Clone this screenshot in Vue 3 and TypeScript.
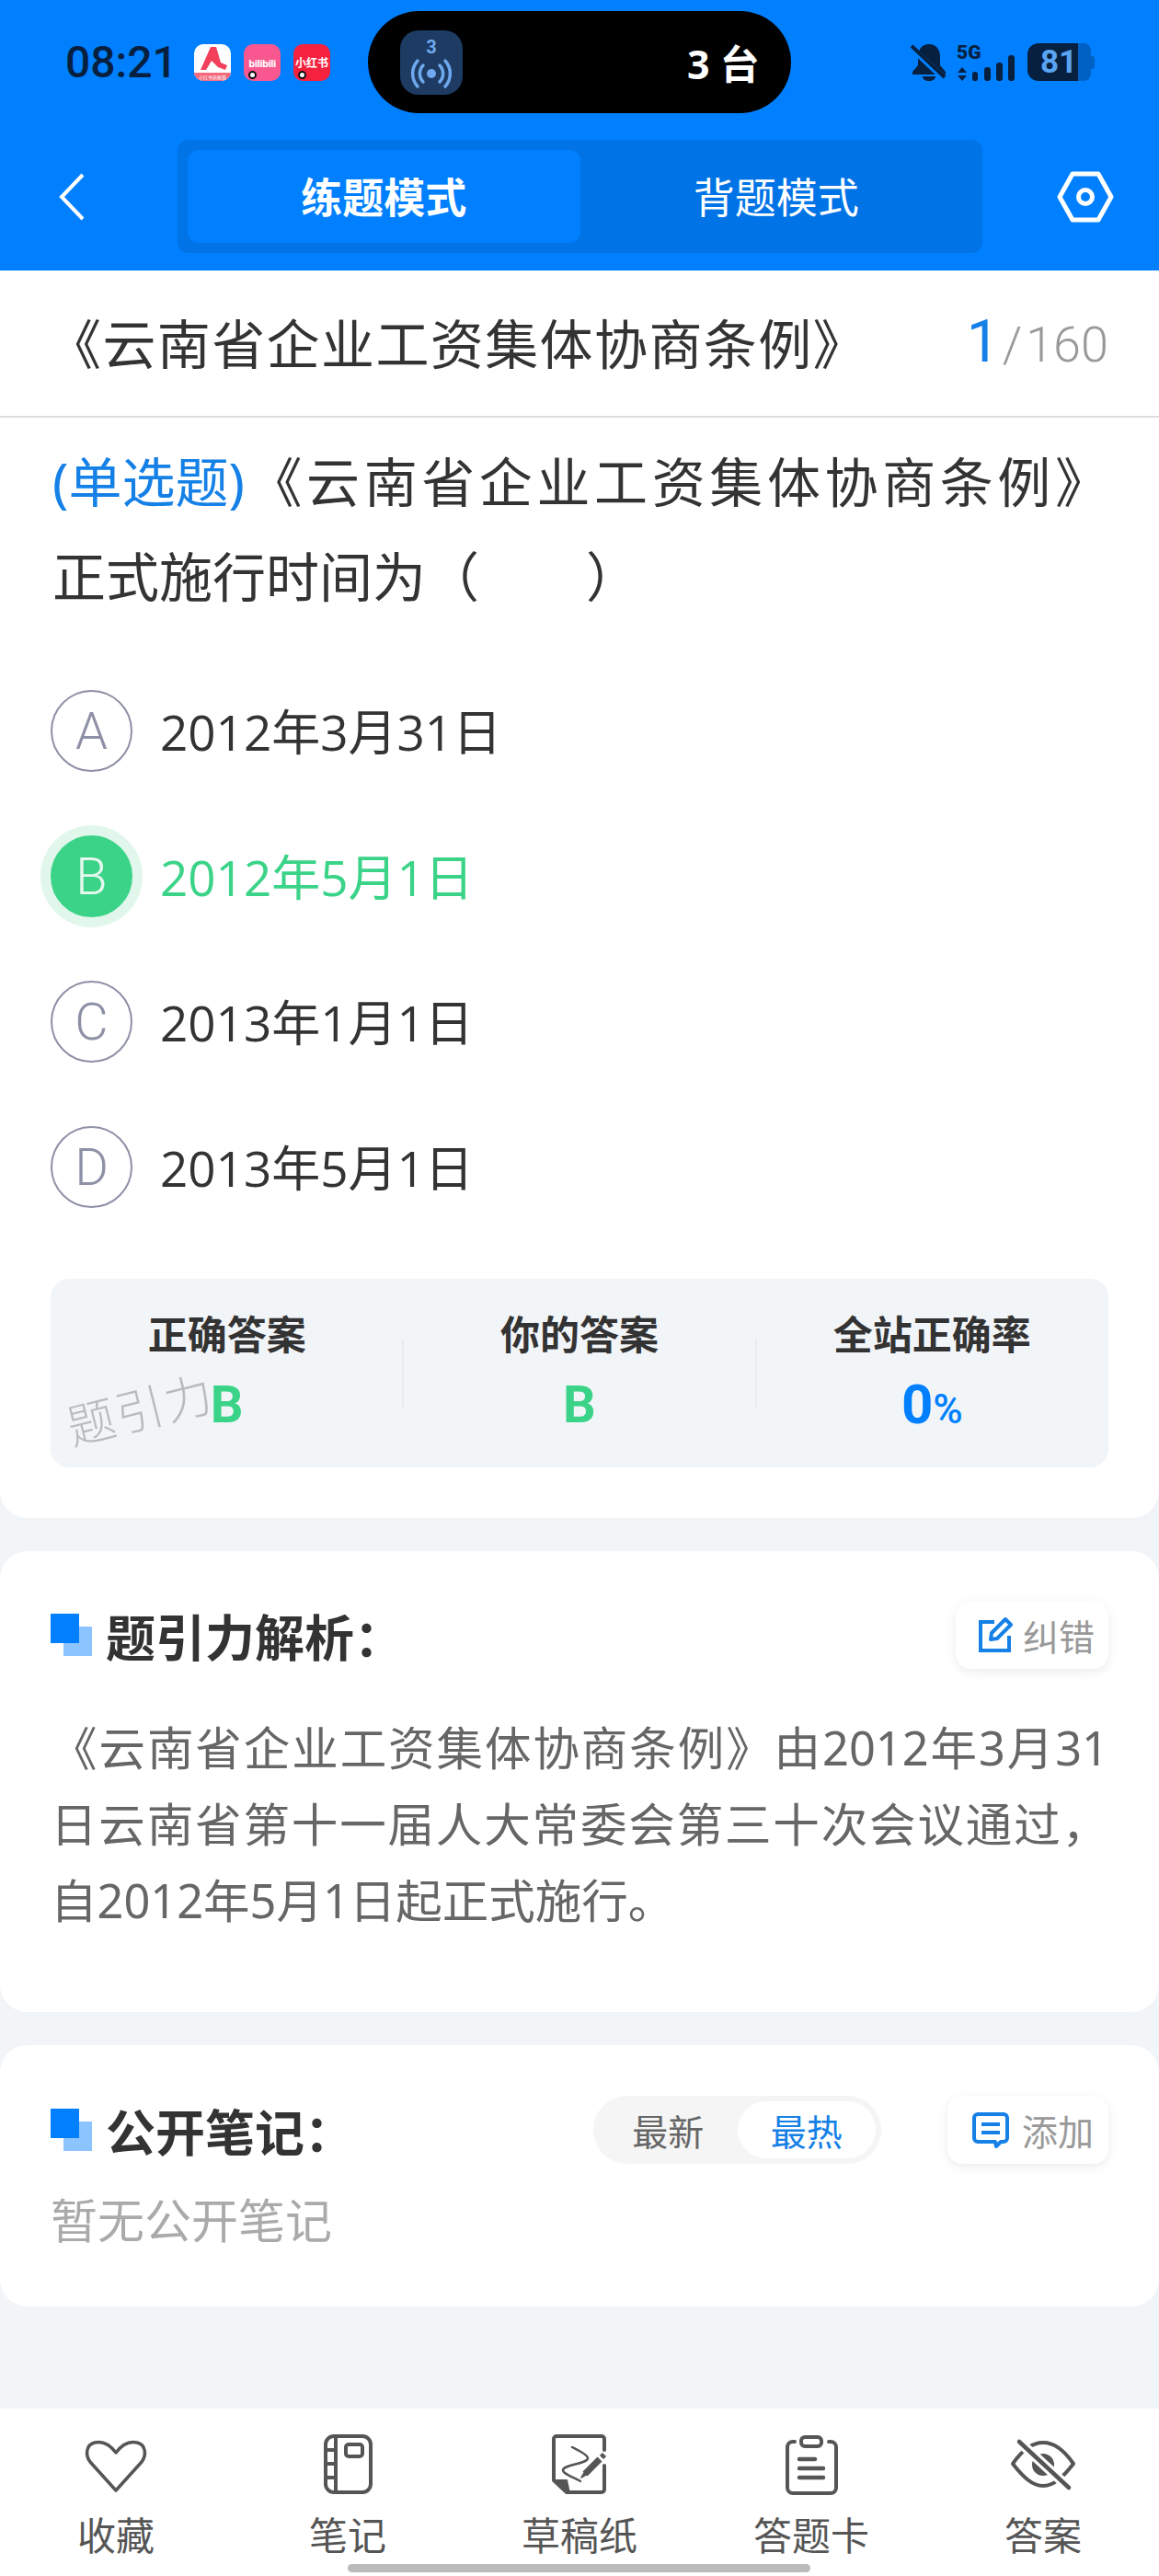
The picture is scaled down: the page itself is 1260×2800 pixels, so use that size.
<script setup lang="ts">
interface Option {
  key: string
  text: string
  correct?: boolean
}

const options: Option[] = [
  { key: 'A', text: '2012年3月31日' },
  { key: 'B', text: '2012年5月1日', correct: true },
  { key: 'C', text: '2013年1月1日' },
  { key: 'D', text: '2013年5月1日' }
]

const tabs = ['收藏', '笔记', '草稿纸', '答题卡', '答案']
</script>

<template>
  <div class="page">
    <header class="top">
      <div class="status">
        <span class="time">08:21</span>
        <div class="apps">
          <span class="app">
            <svg viewBox="0 0 40 40" width="40" height="40">
              <rect width="40" height="40" fill="#fff" />
              <rect y="31" width="40" height="9" fill="#f4697c" />
              <path d="M7 28 18 3h6l5 17 7 3-2 5-8-3-7-7-6 10z" fill="#f2405a" />
              <text x="20" y="38" text-anchor="middle" font-size="5" fill="#fff" font-family="'Noto Sans CJK SC', sans-serif">小红书商家版</text>
            </svg>
          </span>
          <span class="app app-b"><i class="mini">bilibili</i><b class="dot"></b></span>
          <span class="app app-c"><i class="mini big">小红书</i><b class="dot"></b></span>
        </div>
        <div class="island">
          <span class="island-icon">
            <svg viewBox="0 0 68 70" width="68" height="70">
              <text x="34" y="25" text-anchor="middle" font-size="20" font-weight="700" fill="#6fa8ee" font-family="Roboto, sans-serif">3</text>
              <circle cx="34" cy="47" r="5" fill="#6fa8ee" />
              <path d="M25 38a13 13 0 0 0 0 18M43 38a13 13 0 0 1 0 18M19 33a21 21 0 0 0 0 28M49 33a21 21 0 0 1 0 28" fill="none" stroke="#6fa8ee" stroke-width="3.5" stroke-linecap="round" />
            </svg>
          </span>
          <span class="island-text">3 台</span>
        </div>
        <div class="sys">
          <svg viewBox="0 0 40 42" width="40" height="42">
            <path d="M20 1c8 0 12 6 12 14v9l6 7v3H2v-3l6-7v-9C8 7 12 1 20 1zM13 36h14c0 3-3 5-7 5s-7-2-7-5z" fill="#07203f" />
            <path d="M1 5l36 34" stroke="#0080ff" stroke-width="7" />
            <path d="M1 3l36 34" stroke="#07203f" stroke-width="4" />
          </svg>
          <div class="net">
            <span class="five">5G</span>
            <svg viewBox="0 0 64 28" width="64" height="28">
              <path d="M6 13l5 6H1zM6 28l-5-6h10z" fill="#07203f" />
              <g fill="#07203f">
                <rect x="17" y="18" width="6" height="10" rx="2.5" />
                <rect x="30" y="13" width="7" height="15" rx="3" />
                <rect x="43" y="8" width="7" height="20" rx="3" />
                <rect x="56" y="0" width="7" height="28" rx="3" />
              </g>
            </svg>
          </div>
          <div class="battery">
            <span class="level">81</span>
            <span class="rest"></span>
            <span class="nub"></span>
          </div>
        </div>
      </div>
      <nav class="nav">
        <svg class="back" viewBox="0 0 32 54" width="32" height="54">
          <path d="M28 3 5 27l23 24" fill="none" stroke="#fff" stroke-width="4" />
        </svg>
        <div class="mode">
          <div class="mode-item active">练题模式</div>
          <div class="mode-item">背题模式</div>
        </div>
        <svg class="setting" viewBox="0 0 62 56" width="62" height="56">
          <path d="M17 3h28l14 25-14 25H17L3 28z" fill="none" stroke="#fff" stroke-width="5" stroke-linejoin="round" />
          <circle cx="31" cy="28" r="7.5" fill="none" stroke="#fff" stroke-width="5" />
        </svg>
      </nav>
    </header>

    <section class="card first">
      <div class="title-row">
        <span class="paper">《云南省企业工资集体协商条例》</span>
        <span class="count"><em>1</em><i>/</i>160</span>
      </div>
      <div class="question">
        <p class="first-line"><span class="type">(单选题)</span>《云南省企业工资集体协商条例》</p>
        <p>正式施行时间为（　　）</p>
      </div>
      <div class="options">
        <div v-for="o in options" :key="o.key" class="option" :class="{ right: o.correct }">
          <span class="mark">{{ o.key }}</span>
          <span class="text">{{ o.text }}</span>
        </div>
      </div>
      <div class="stats">
        <div class="stat">
          <div class="stat-label">正确答案</div>
          <div class="stat-value green">B</div>
        </div>
        <div class="stat">
          <div class="stat-label">你的答案</div>
          <div class="stat-value green">B</div>
        </div>
        <div class="stat">
          <div class="stat-label">全站正确率</div>
          <div class="stat-value blue">0<small>%</small></div>
        </div>
        <span class="watermark">题引力</span>
      </div>
    </section>

    <section class="card analysis">
      <div class="head">
        <span class="squares"><i></i><b></b></span>
        <h2>题引力解析：</h2>
        <span class="tool">
          <svg viewBox="0 0 40 40" width="40" height="40">
            <path d="M19 6H4v31h31V21" fill="none" stroke="#1580e6" stroke-width="4" />
            <path d="M15 25l1-7L31 3l6 6-15 15z" fill="none" stroke="#1580e6" stroke-width="4" stroke-linejoin="round" />
          </svg>
          纠错
        </span>
      </div>
      <p class="body">《云南省企业工资集体协商条例》由2012年3月31日云南省第十一届人大常委会第三十次会议通过，自2012年5月1日起正式施行。</p>
    </section>

    <section class="card notes">
      <div class="head">
        <span class="squares"><i></i><b></b></span>
        <h2>公开笔记：</h2>
        <div class="sort">
          <span>最新</span>
          <span class="on">最热</span>
        </div>
        <span class="tool add">
          <svg viewBox="0 0 42 40" width="42" height="40">
            <path d="M7 3h28a4 4 0 0 1 4 4v22a4 4 0 0 1-4 4h-3l-5 5-1-5H7a4 4 0 0 1-4-4V7a4 4 0 0 1 4-4z" fill="none" stroke="#1580e6" stroke-width="4" stroke-linejoin="round" />
            <path d="M11 14h20M11 23h20" stroke="#1580e6" stroke-width="4" />
          </svg>
          添加
        </span>
      </div>
      <p class="empty">暂无公开笔记</p>
    </section>

    <div class="spacer"></div>

    <footer class="bar">
      <div v-for="(t, i) in tabs" :key="t" class="tab">
        <svg viewBox="0 0 72 66" width="72" height="66" class="tab-icon">
          <g fill="none" stroke="#555" stroke-width="4" stroke-linejoin="round">
            <path v-if="i === 0" d="M36 61 8 30C2 22 4 11 13 9c9-2 17 3 23 11 6-8 14-13 23-11 9 2 11 13 5 21z" stroke-width="3.5" />
            <template v-if="i === 1">
              <rect x="12" y="2" width="49" height="61" rx="9" />
              <path d="M23 2v61M12 17h11M12 32h11M12 47h11" />
              <rect x="34" y="11" width="18" height="13" rx="3" />
            </template>
            <template v-if="i === 2">
              <path d="M63 17V5a3 3 0 0 0-3-3H11a3 3 0 0 0-3 3v45l14 13h38a3 3 0 0 0 3-3V34" stroke-linecap="round" />
              <path d="M8 50h14l3 14z" fill="#555" stroke-width="2" />
              <path d="M28 14c6 3 17 8 17 12 0 6-27 7-27 13 0 4 12 8 19 12" stroke-width="2.5" stroke-linecap="round" />
              <path d="M42 43 58 27" stroke-width="7" />
              <path d="M38 47l3-5 2 2z" fill="#555" stroke-width="1.5" />
              <path d="M60 25l3-3" stroke-width="6" />
            </template>
            <template v-if="i === 3">
              <path d="M18 8h-2a6 6 0 0 0-6 6v44a6 6 0 0 0 6 6h41a6 6 0 0 0 6-6V14a6 6 0 0 0-6-6h-2" stroke-linecap="round" />
              <rect x="25" y="3" width="22" height="10" rx="4" />
              <path d="M23 27h17M23 37h26M23 47h26" stroke-width="4.5" stroke-linecap="round" />
            </template>
            <template v-if="i === 4">
              <path d="M3 32C14 16 24 9 36 9s22 7 33 23C58 46 48 56 36 56S14 46 3 32z" />
              <circle cx="36" cy="33" r="12" fill="#555" stroke="none" />
              <path d="M10 8l54 50" stroke="#fff" stroke-width="11" />
              <path d="M10 8l54 50" stroke-width="4.5" stroke-linecap="round" />
            </template>
          </g>
        </svg>
        <span class="tab-label">{{ t }}</span>
      </div>
      <span class="home"></span>
    </footer>
  </div>
</template>

<style>
html,
body {
  background: #f2f5f8;
}
</style>

<style scoped>
.page {
  width: 1260px;
  height: 2800px;
  display: flex;
  flex-direction: column;
  overflow: hidden;
  background: #f2f5f8;
  color: #333;
  font-family: "Noto Sans", "Noto Sans CJK SC", sans-serif;
}

.top {
  height: 294px;
  background: #0080ff;
  flex: none;
}

.status {
  height: 136px;
  box-sizing: border-box;
  padding-top: 12px;
  padding-left: 71px;
  display: flex;
  align-items: flex-start;
}

.time {
  width: 140px;
  margin-top: 24px;
  font-family: Roboto, sans-serif;
  font-size: 48px;
  line-height: 64px;
  font-weight: 500;
  color: #07203f;
  flex: none;
}

.apps {
  width: 189px;
  display: flex;
  gap: 14px;
  margin-top: 36px;
  flex: none;
}

.app {
  position: relative;
  width: 40px;
  height: 40px;
  border-radius: 10px;
  overflow: hidden;
  display: flex;
  align-items: center;
  justify-content: center;
  flex: none;
}

.app-b {
  background: #f8588f;
}

.app-c {
  background: #f5223f;
}

.mini {
  font-size: 11px;
  font-style: normal;
  font-weight: 700;
  color: #fff;
  white-space: nowrap;
  letter-spacing: -0.5px;
}

.mini.big {
  font-size: 12px;
  letter-spacing: 0;
}

.dot {
  position: absolute;
  left: 5px;
  bottom: 2px;
  width: 5px;
  height: 5px;
  border: 2px solid #111;
  border-radius: 50%;
  background: #fff;
}

.island {
  width: 460px;
  height: 111px;
  border-radius: 56px;
  background: #000;
  display: flex;
  align-items: center;
  box-sizing: border-box;
  padding-left: 35px;
  flex: none;
}

.island-icon {
  width: 68px;
  height: 70px;
  border-radius: 20px;
  background: #1d3b63;
  flex: none;
}

.island-text {
  margin-left: 244px;
  color: #fff;
  font-size: 43px;
  font-weight: 700;
  white-space: nowrap;
}

.sys {
  margin-left: 130px;
  margin-top: 35px;
  display: flex;
  align-items: flex-start;
}

.net {
  width: 64px;
  margin-left: 10px;
  display: flex;
  flex-direction: column;
}

.five {
  font-family: Roboto, sans-serif;
  font-size: 21px;
  line-height: 20px;
  font-weight: 900;
  color: #07203f;
}

.net svg {
  margin-top: -7px;
}

.battery {
  width: 73px;
  height: 41px;
  margin-left: 13px;
  display: flex;
  align-items: center;
}

.level {
  width: 55px;
  height: 41px;
  box-sizing: border-box;
  padding-left: 14px;
  background: #07203f;
  border-radius: 12px 0 0 12px;
  color: #5aa4f2;
  font-family: Roboto, sans-serif;
  font-size: 35px;
  line-height: 41px;
  font-weight: 700;
}

.rest {
  width: 14px;
  height: 41px;
  border-radius: 0 8px 8px 0;
  background: #0061c4;
}

.nub {
  width: 4px;
  height: 14px;
  border-radius: 0 3px 3px 0;
  background: #0061c4;
}

.nav {
  height: 158px;
  display: flex;
  align-items: flex-start;
  padding-top: 16px;
  box-sizing: border-box;
}

.back {
  margin: 35px 0 0 62px;
  flex: none;
}

.mode {
  margin-left: 99px;
  width: 875px;
  height: 123px;
  box-sizing: border-box;
  padding: 11px;
  background: #0073e6;
  border-radius: 12px;
  display: flex;
  flex: none;
}

.mode-item {
  flex: 1;
  display: flex;
  align-items: center;
  justify-content: center;
  padding-bottom: 2px;
  color: #fff;
  font-size: 45px;
}

.mode-item.active {
  background: #0080ff;
  border-radius: 12px;
  font-weight: 700;
}

.setting {
  margin: 34px 0 0 81px;
  flex: none;
}

.card {
  background: #fff;
  border-radius: 30px;
  flex: none;
  box-sizing: border-box;
}

.first {
  height: 1356px;
  border-radius: 0 0 30px 30px;
}

.title-row {
  height: 160px;
  border-bottom: 2px solid #ddd;
  box-sizing: border-box;
  padding: 0 55px 4px 52px;
  display: flex;
  align-items: center;
  justify-content: space-between;
}

.paper {
  font-size: 58px;
  letter-spacing: 1.4px;
  white-space: nowrap;
}

.count {
  color: #999;
  font-size: 54px;
  font-weight: 300;
  font-family: Roboto, sans-serif;
}

.count em {
  font-style: normal;
  font-weight: 400;
  color: #1580e6;
  font-size: 64px;
}

.count i {
  font-style: normal;
  margin: 0 4px 0 3px;
}

.question {
  margin: 18px 55px 0 57px;
  font-size: 58px;
  line-height: 103px;
}

.question p {
  margin: 0;
}

.first-line {
  text-align: justify;
  text-align-last: justify;
}

.type {
  display: inline-block;
  color: #1580e6;
}

.options {
  margin-top: 72px;
  padding-left: 55px;
  display: flex;
  flex-direction: column;
  gap: 69px;
}

.option {
  height: 89px;
  display: flex;
  align-items: center;
  font-size: 53px;
  font-family: "Open Sans", "Noto Sans CJK SC", sans-serif;
}

.text {
  margin-top: -3px;
}

.mark {
  width: 89px;
  height: 89px;
  box-sizing: border-box;
  border: 2px solid #8e90a6;
  border-radius: 50%;
  color: #8e90a6;
  font-family: Roboto, sans-serif;
  font-size: 56px;
  font-weight: 300;
  display: flex;
  align-items: center;
  justify-content: center;
  margin-right: 30px;
  flex: none;
}

.option.right {
  color: #3bd388;
}

.option.right .mark {
  background: #3bd388;
  border-color: #3bd388;
  color: #e4f8ee;
  box-shadow: 0 0 0 11px #e2f7ec;
}

.stats {
  position: relative;
  margin: 77px 55px 0;
  height: 205px;
  background: #f2f5f8;
  border-radius: 20px;
  display: flex;
}

.stat {
  flex: 1;
  text-align: center;
  position: relative;
  padding-top: 32px;
}

.stat + .stat::before {
  content: "";
  position: absolute;
  left: -1px;
  top: 66px;
  height: 74px;
  width: 2px;
  background: #e8eaee;
}

.stat-label {
  font-size: 43px;
  line-height: 58px;
  font-weight: 700;
}

.stat-value {
  margin-top: 12px;
  font-size: 56px;
  line-height: 70px;
  font-weight: 700;
  font-family: Roboto, sans-serif;
}

.stat-value small {
  font-size: 44px;
  font-weight: 500;
}

.green {
  color: #3bd388;
}

.blue {
  color: #0080ff;
  font-size: 60px;
}

.watermark {
  position: absolute;
  left: 16px;
  top: 102px;
  font-size: 52px;
  font-weight: 300;
  color: #bbb;
  transform: rotate(-14deg);
  letter-spacing: 2px;
  white-space: nowrap;
}

.analysis {
  margin-top: 36px;
  height: 501px;
  padding: 54px 55px 0 55px;
}

.notes {
  margin-top: 36px;
  height: 284px;
  padding: 55px 55px 0;
}

.head {
  display: flex;
  align-items: center;
  height: 74px;
}

.squares {
  position: relative;
  width: 45px;
  height: 46px;
  margin-right: 15px;
  flex: none;
}

.squares i,
.squares b {
  position: absolute;
  width: 31px;
  height: 32px;
}

.squares b {
  left: 14px;
  top: 14px;
  background: #8cc4ff;
}

.squares i {
  left: 0;
  top: 0;
  background: #0080ff;
  z-index: 1;
}

h2 {
  margin: 0;
  font-size: 54px;
  font-weight: 700;
  flex: 1;
  white-space: nowrap;
}

.tool {
  display: flex;
  align-items: center;
  gap: 10px;
  height: 74px;
  padding: 0 0 0 23px;
  width: 166px;
  box-sizing: border-box;
  background: #fff;
  border-radius: 16px;
  box-shadow: 0 3px 12px rgba(0, 0, 0, 0.08);
  color: #999;
  font-size: 39px;
  flex: none;
}

.add {
  width: 175px;
  margin-left: 72px;
  padding-left: 26px;
  gap: 13px;
}

.sort {
  width: 313px;
  height: 74px;
  box-sizing: border-box;
  background: #f5f5f5;
  border-radius: 37px;
  padding: 6px;
  display: flex;
  font-size: 39px;
  color: #666;
  flex: none;
}

.sort span {
  flex: 1;
  display: flex;
  align-items: center;
  justify-content: center;
  border-radius: 31px;
}

.sort .on {
  background: #fff;
  color: #1580e6;
}

.body {
  margin: 44px 0 0;
  font-size: 50.5px;
  line-height: 83px;
  color: #666;
  text-align: justify;
}

.empty {
  margin: 26px 0 0;
  font-size: 51px;
  line-height: 70px;
  color: #aaa;
}

.spacer {
  flex: 1;
}

.bar {
  position: relative;
  height: 182px;
  background: #fff;
  display: flex;
  padding-top: 28px;
  box-sizing: border-box;
  flex: none;
}

.tab {
  flex: 1;
  display: flex;
  flex-direction: column;
  align-items: center;
}

.tab-icon {
  flex: none;
}

.tab-label {
  margin-top: 15px;
  font-size: 42px;
  line-height: 58px;
  color: #555;
}

.home {
  position: absolute;
  left: 378px;
  bottom: 4px;
  width: 503px;
  height: 9px;
  border-radius: 5px;
  background: #bbb;
}
</style>
